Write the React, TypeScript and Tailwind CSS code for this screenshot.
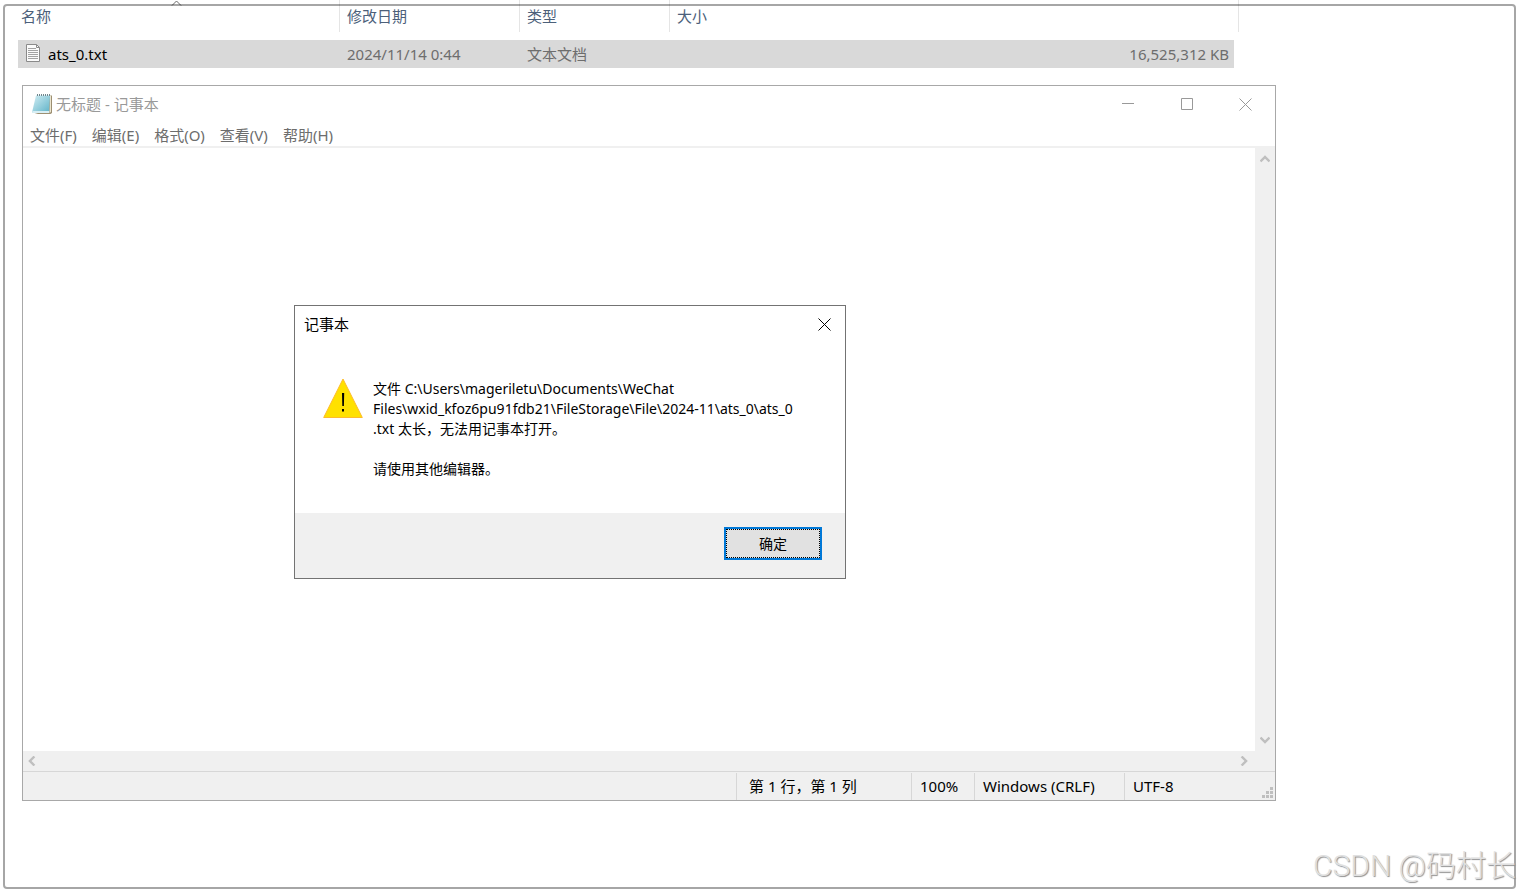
import React, { useState } from "react";

interface FileEntry {
  name: string;
  modified: string;
  type: string;
  size: string;
}

const files: FileEntry[] = [
  {
    name: "ats_0.txt",
    modified: "2024/11/14 0:44",
    type: "文本文档",
    size: "16,525,312 KB",
  },
];

const menuItems = ["文件(F)", "编辑(E)", "格式(O)", "查看(V)", "帮助(H)"];

const TextFileIcon = () => (
  <svg width="16" height="20" viewBox="0 0 16 20" fill="none">
    <path d="M1.5.5h10l3 3v14h-13z" fill="#fbfbfb" stroke="#8a8a8a" />
    <path d="M11.5.5v3h3" stroke="#8a8a8a" />
    <path
      d="M3 4.500h8M3 6.500h10M3 8.500h10M3 10.500h10M3 12.500h10M3 14.500h10"
      stroke="#a3a3a3"
    />
  </svg>
);

const NotepadIcon = () => (
  <svg width="20" height="20" viewBox="0 0 20 20" fill="none">
    <defs>
      <linearGradient id="pad" x1="0" y1="0" x2="1" y2="1">
        <stop offset="0" stopColor="#d3eef4" />
        <stop offset="1" stopColor="#5fb3c8" />
      </linearGradient>
    </defs>
    <path d="M18 1.500h2V19l-1.500 1H6L1 18.500z" fill="#9c8f72" />
    <path d="M18 1.500h1V18l-1.500 1z" fill="#ece5cf" />
    <path d="M4 1.500h14L17 18.500H0z" fill="url(#pad)" />
    <path d="M.5 17h16.700L17 19H.200z" fill="#d7eef4" />
    <path
      d="M5.500 0v2M7.500 0v2M9.500 0v2M11.500 0v2M13.500 0v2M15.500 0v2M17.500 0v2"
      stroke="#6f868d"
    />
  </svg>
);

const CloseIcon = () => (
  <svg width="13" height="13" viewBox="0 0 13 13" stroke="currentColor">
    <path d="M.5.5l12 12M12.5.5l-12 12" />
  </svg>
);

const ArrowIcon = ({ className = "" }: { className?: string }) => (
  <svg
    width="10"
    height="8"
    viewBox="0 0 10 8"
    fill="none"
    stroke="#bfbfbf"
    strokeWidth="2.400"
    className={className}
  >
    <path d="M.5 6.400L5 1.900l4.500 4.500" />
  </svg>
);

const ResizeGrip = () => (
  <svg width="11" height="11" viewBox="0 0 11 11" fill="#bfbfbf">
    <path d="M8 0h3v3H8zM4 4h3v3H4zM8 4h3v3H8zM0 8h3v3H0zM4 8h3v3H4zM8 8h3v3H8z" />
  </svg>
);

const FileList = () => (
  <table className="ml-[18px] w-[calc(100%-299px)] table-fixed border-separate border-spacing-0 text-left">
    <colgroup>
      <col className="w-[322px]" />
      <col className="w-[180px]" />
      <col className="w-[150px]" />
      <col />
      <col className="w-[5px]" />
    </colgroup>
    <thead className="text-[#4c607a]">
      <tr className="h-10 align-top">
        <th className="relative p-0 font-normal">
          <div className="h-8 border-r border-[#e5e5e5] pl-[3px] leading-8">
            名称
          </div>
          {/* sort direction marker */}
          <svg
            className="absolute left-[153px] top-0"
            width="11"
            height="6"
            viewBox="0 0 11 6"
            fill="none"
            stroke="#6b6b6b"
          >
            <path d="M1 5.500l4.500-4.500L10 5.500" />
          </svg>
        </th>
        <th className="p-0 font-normal">
          <div className="h-8 border-r border-[#e5e5e5] pl-[7px] leading-8">
            修改日期
          </div>
        </th>
        <th className="p-0 font-normal">
          <div className="h-8 border-r border-[#e5e5e5] pl-[7px] leading-8">
            类型
          </div>
        </th>
        <th className="p-0 font-normal" colSpan={2}>
          <div className="h-8 border-r border-[#e5e5e5] pl-[7px] leading-8">
            大小
          </div>
        </th>
      </tr>
    </thead>
    <tbody className="text-[#6d6d6d]">
      {files.map((file) => (
        <tr key={file.name} className="h-7">
          <td className="bg-[#d9d9d9] p-0 pl-[7px] text-black">
            <div className="flex items-center gap-[7px]">
              <TextFileIcon />
              {file.name}
            </div>
          </td>
          <td className="bg-[#d9d9d9] p-0 pl-[7px]">{file.modified}</td>
          <td className="bg-[#d9d9d9] p-0 pl-[7px]">{file.type}</td>
          <td className="bg-[#d9d9d9] p-0 pr-[5px] text-right">{file.size}</td>
          <td className="p-0" />
        </tr>
      ))}
    </tbody>
  </table>
);

const ErrorDialog = ({ onClose }: { onClose: () => void }) => (
  <div
    role="alertdialog"
    aria-labelledby="dialog-title"
    className="absolute left-[271px] top-[219px] flex w-[552px] flex-col border border-[#737373] bg-white text-black"
  >
    <div className="flex h-9 items-center justify-between pl-[9px]">
      <h2 id="dialog-title">记事本</h2>
      <button
        aria-label="关闭"
        onClick={onClose}
        className="flex h-9 w-[42px] items-center justify-center"
      >
        <CloseIcon />
      </button>
    </div>
    <div className="flex gap-[10px] px-7 pb-[34px] pt-9">
      <svg width="40" height="40" viewBox="0 0 40 40" className="shrink-0">
        <path d="M20 1L39.300 39.500H.7z" fill="#ffe100" stroke="#fdbb2c" />
        <path d="M19 15h2.200l-.3 13h-1.600zM19 31h2v2.500h-2z" fill="#000" />
      </svg>
      <p className="pt-px text-[14px] leading-5">
        文件 C:\Users\mageriletu\Documents\WeChat
        <br />
        Files\wxid_kfoz6pu91fdb21\FileStorage\File\2024-11\ats_0\ats_0
        <br />
        .txt 太长，无法用记事本打开。
        <br />
        <br />
        请使用其他编辑器。
      </p>
    </div>
    <div className="flex h-[65px] justify-end bg-[#f0f0f0] pr-[23px] pt-[14px]">
      <button
        onClick={onClose}
        className="h-[33px] w-[98px] border-2 border-[#0078d7] bg-[#e1e1e1] text-[14px]"
      >
        <span className="flex h-full items-center justify-center border border-dotted border-black">
          确定
        </span>
      </button>
    </div>
  </div>
);

const Notepad = () => {
  const [dialogOpen, setDialogOpen] = useState(true);

  return (
    <div className="relative mb-[91px] ml-[22px] mr-[244px] mt-[17px] flex flex-1 flex-col border border-[#a8a8a8] bg-white">
      <div className="flex h-9 items-center text-[#999999]">
        <div className="flex flex-1 items-center gap-1 pl-[9px]">
          <NotepadIcon />
          <h1>无标题 - 记事本</h1>
        </div>
        <button
          aria-label="最小化"
          className="flex h-9 w-[59px] items-center justify-center"
        >
          <svg width="12" height="12" stroke="currentColor">
            <path d="M0 5.500h12" />
          </svg>
        </button>
        <button
          aria-label="最大化"
          className="flex h-9 w-[59px] items-center justify-center"
        >
          <svg width="12" height="12" stroke="currentColor" fill="none">
            <path d="M.5.5h11v11H.5z" />
          </svg>
        </button>
        <button
          aria-label="关闭"
          className="flex h-9 w-[59px] items-center justify-center"
        >
          <CloseIcon />
        </button>
      </div>

      <nav className="flex h-[26px] items-center gap-[15px] border-b-2 border-[#f0f0f0] pl-[7px] pt-0.5 text-[#6d6d6d]">
        {menuItems.map((item) => (
          <button key={item}>{item}</button>
        ))}
      </nav>

      <div className="flex flex-1">
        <textarea
          aria-label="文本编辑器"
          className="flex-1 resize-none p-1 outline-none"
        />
        <div className="flex w-5 flex-col items-center justify-between bg-[#f0f0f0] py-[7px]">
          <ArrowIcon />
          <ArrowIcon className="rotate-180" />
        </div>
      </div>
      <div className="flex h-5 items-center justify-between bg-[#f0f0f0] pl-1 pr-[26px]">
        <ArrowIcon className="-rotate-90" />
        <ArrowIcon className="rotate-90" />
      </div>

      <div className="relative flex h-[29px] justify-end border-t border-[#d7d7d7] bg-[#f0f0f0] pt-px leading-[26px] text-black">
        <div className="w-[175px] border-l border-[#d7d7d7] pl-3">
          第 1 行，第 1 列
        </div>
        <div className="w-[63px] border-l border-[#d7d7d7] pl-2">100%</div>
        <div className="w-[150px] border-l border-[#d7d7d7] pl-2">
          Windows (CRLF)
        </div>
        <div className="w-[151px] border-l border-[#d7d7d7] pl-2">UTF-8</div>
        <div className="absolute bottom-0.5 right-0.5">
          <ResizeGrip />
        </div>
      </div>

      {dialogOpen && <ErrorDialog onClose={() => setDialogOpen(false)} />}
    </div>
  );
};

export default function App() {
  return (
    <div className="relative flex min-h-screen flex-col overflow-hidden bg-white font-['Noto_Sans','Noto_Sans_CJK_SC',sans-serif] text-[15px]">
      <FileList />
      <Notepad />
      <div className="pointer-events-none absolute bottom-[3px] left-[3px] right-1 top-1 rounded border-2 border-black/35" />
      <div className="absolute bottom-1 right-1 font-['Roboto','Noto_Sans_CJK_SC',sans-serif] text-[30px] font-light leading-[44px] text-[#e0e0e0] [text-shadow:1px_1px_1px_#8f8f8f]">
        CSDN @码村长
      </div>
    </div>
  );
}
